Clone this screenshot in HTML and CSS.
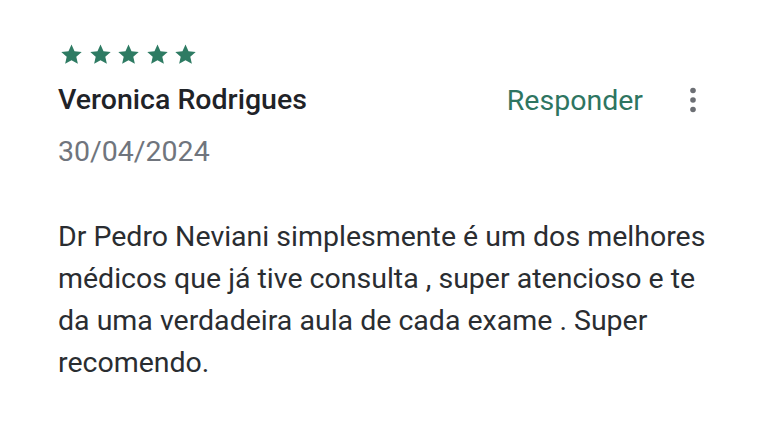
FILE: index.html
```html
<!DOCTYPE html>
<html lang="pt">
<head>
  <meta charset="UTF-8">
  <meta name="viewport" content="width=device-width, initial-scale=1.0">
  <title>Avaliação</title>
  <link rel="stylesheet" href="styles.css">
</head>
<body>
  <div class="review">
    <div class="stars">
      <svg class="star" viewBox="0 0 24 24"><path d="M12 2.5l2.9 6.3 6.9.7-5.2 4.6 1.5 6.8L12 17.4l-6.1 3.5 1.5-6.8-5.2-4.6 6.9-.7z"/></svg>
      <svg class="star" viewBox="0 0 24 24"><path d="M12 2.5l2.9 6.3 6.9.7-5.2 4.6 1.5 6.8L12 17.4l-6.1 3.5 1.5-6.8-5.2-4.6 6.9-.7z"/></svg>
      <svg class="star" viewBox="0 0 24 24"><path d="M12 2.5l2.9 6.3 6.9.7-5.2 4.6 1.5 6.8L12 17.4l-6.1 3.5 1.5-6.8-5.2-4.6 6.9-.7z"/></svg>
      <svg class="star" viewBox="0 0 24 24"><path d="M12 2.5l2.9 6.3 6.9.7-5.2 4.6 1.5 6.8L12 17.4l-6.1 3.5 1.5-6.8-5.2-4.6 6.9-.7z"/></svg>
      <svg class="star" viewBox="0 0 24 24"><path d="M12 2.5l2.9 6.3 6.9.7-5.2 4.6 1.5 6.8L12 17.4l-6.1 3.5 1.5-6.8-5.2-4.6 6.9-.7z"/></svg>
    </div>
    <div class="head">
      <div class="name">Veronica Rodrigues</div>
      <div class="actions">
        <span class="reply">Responder</span>
        <svg class="more" viewBox="0 0 8 28"><circle cx="4" cy="4.5" r="2.8"/><circle cx="4" cy="14" r="2.8"/><circle cx="4" cy="23.5" r="2.8"/></svg>
      </div>
    </div>
    <div class="date">30/04/2024</div>
    <p class="text">Dr Pedro Neviani simplesmente é um dos melhores médicos que já tive consulta , super atencioso e te da uma verdadeira aula de cada exame . Super recomendo.</p>
  </div>
</body>
</html>
```

FILE: styles.css
```css
body {
  margin: 0;
  background: #fff;
  font-family: Roboto, "Noto Sans", Arial, sans-serif;
  color: #1f2328;
}
.review {
  padding: 42px 0 0 58px;
}
.stars {
  display: flex;
  gap: 3.5px;
  margin-left: 1px;
}
.star {
  width: 25px;
  height: 25px;
  fill: #2e7b63;
}
.head {
  display: flex;
  align-items: center;
  justify-content: space-between;
  margin-top: 13px;
  padding-right: 71px;
}
.name {
  font-size: 28.5px;
  font-weight: 500;
  line-height: 40px;
}
.actions {
  display: flex;
  align-items: center;
  gap: 46px;
}
.reply {
  font-size: 28.5px;
  color: #2e7561;
}
.more {
  width: 8px;
  height: 28px;
  fill: #6c6f74;
}
.date {
  margin-top: 12px;
  font-size: 28.5px;
  line-height: 40px;
  color: #70757d;
}
.text {
  max-width: 665px;
  margin: 44px 0 0;
  font-size: 28.5px;
  line-height: 42px;
  color: #2a2d31;
}
```
